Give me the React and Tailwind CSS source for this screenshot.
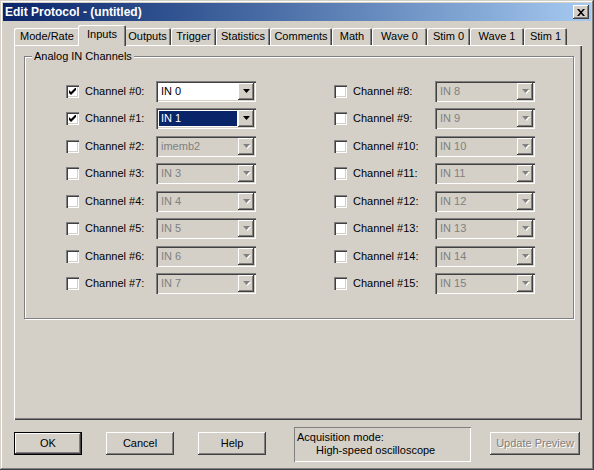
import { Fragment } from 'react'

const TABS = [
  { label: 'Mode/Rate', w: 'w-[66px]' },
  { label: 'Inputs', w: 'w-[48px]', active: true },
  { label: 'Outputs', w: 'w-[47px]' },
  { label: 'Trigger', w: 'w-[45px]' },
  { label: 'Statistics', w: 'w-[54px]' },
  { label: 'Comments', w: 'w-[62px]' },
  { label: 'Math', w: 'w-[40px]' },
  { label: 'Wave 0', w: 'w-[55px]' },
  { label: 'Stim 0', w: 'w-[43px]' },
  { label: 'Wave 1', w: 'w-[54px]' },
  { label: 'Stim 1', w: 'w-[43px]' },
]

const LEFT = [
  { n: 0, v: 'IN 0', checked: true, enabled: true },
  { n: 1, v: 'IN 1', checked: true, enabled: true, selected: true },
  { n: 2, v: 'imemb2' },
  { n: 3, v: 'IN 3' },
  { n: 4, v: 'IN 4' },
  { n: 5, v: 'IN 5' },
  { n: 6, v: 'IN 6' },
  { n: 7, v: 'IN 7' },
]

const RIGHT = [8, 9, 10, 11, 12, 13, 14, 15].map((n) => ({ n, v: `IN ${n}` }))

const SUNKEN = 'shadow-[inset_1px_1px_0_#808080,inset_2px_2px_0_#404040,inset_-1px_-1px_0_#fff,inset_-2px_-2px_0_#d4d0c8]'
const RAISED = 'shadow-[inset_-1px_-1px_0_#404040,inset_1px_1px_0_#fff,inset_-2px_-2px_0_#808080,inset_2px_2px_0_#d4d0c8]'

const Checkbox = ({ checked }) => (
  <div className={`w-[13px] h-[13px] bg-white flex items-center justify-center shrink-0 ${SUNKEN}`}>
    {checked && (
      <svg width="7" height="7" viewBox="0 0 7 7">
        <path d="M0 2 L2 4 L7 -1 L7 2 L2 7 L0 5 Z" fill="#000" />
      </svg>
    )}
  </div>
)

const Arrow = ({ enabled }) => (
  <svg width="8" height="5" viewBox="0 0 8 5">
    {!enabled && <polygon points="1,1 8,1 4.5,5" fill="#fff" />}
    <polygon points="0,0 7,0 3.5,4" fill={enabled ? '#000' : '#808080'} />
  </svg>
)

const Combo = ({ value, enabled, selected }) => (
  <div className={`w-[100px] h-[21px] p-[2px] flex shrink-0 ${enabled ? 'bg-white' : 'bg-[#d4d0c8]'} ${SUNKEN}`}>
    <div className="flex-1 p-[1px] flex">
      <div
        className={`flex-1 flex items-center pl-[2px] ${selected ? 'bg-[#0a246a] text-white' : enabled ? 'text-black' : 'text-[#808080]'}`}
      >
        {value}
      </div>
    </div>
    <div className={`w-[16px] h-[17px] bg-[#d4d0c8] flex items-center justify-center pl-[1px] ${RAISED}`}>
      <Arrow enabled={enabled} />
    </div>
  </div>
)

const ChannelRow = ({ ch, labelW }) => (
  <div className="flex items-center h-[21px]">
    <Checkbox checked={ch.checked} />
    <span className={`ml-[6px] ${labelW}`}>Channel #{ch.n}:</span>
    <Combo value={ch.v} enabled={ch.enabled} selected={ch.selected} />
  </div>
)

const Button = ({ children, isDefault, disabled, w = 'w-[68px]' }) => (
  <div
    className={`${w} h-[23px] mt-[5px] bg-[#d4d0c8] flex items-center justify-center ${isDefault ? 'border border-black' : ''} ${RAISED} ${disabled ? 'text-[#808080] [text-shadow:1px_1px_0_#fff]' : 'text-black'}`}
  >
    {children}
  </div>
)

export default function App() {
  return (
    <div className="w-[594px] h-[470px] bg-[#d4d0c8] p-[3px] text-[11px] leading-none text-black font-['Liberation_Sans',Arial,sans-serif] shadow-[inset_-1px_-1px_0_#404040,inset_1px_1px_0_#d4d0c8,inset_-2px_-2px_0_#808080,inset_2px_2px_0_#fff] overflow-hidden">
      {/* title bar */}
      <div className="h-[18px] bg-linear-to-r from-[#0a246a] to-[#a6caf0] flex items-center justify-between pl-[2px] pr-[2px]">
        <span className="text-white font-bold text-[12px]">Edit Protocol - (untitled)</span>
        <div className={`w-[16px] h-[14px] bg-[#d4d0c8] flex items-center justify-center ${RAISED}`}>
          <svg width="8" height="7" viewBox="0 0 8 7">
            <path d="M0 0 L2 0 L4 2.2 L6 0 L8 0 L5 3.5 L8 7 L6 7 L4 4.8 L2 7 L0 7 L3 3.5 Z" fill="#000" />
          </svg>
        </div>
      </div>

      <div className="pl-[11px]">
        {/* tabs */}
        <div className="mt-[4px] h-[20px] flex items-end">
          {TABS.map((t) => (
            <div
              key={t.label}
              className={`${t.w} flex items-center justify-center bg-[#d4d0c8] rounded-t-[2px] shadow-[inset_1px_1px_0_#fff,inset_-1px_0_0_#404040,inset_-2px_0_0_#808080] ${t.active ? 'h-[21px] -mx-[2px] -mb-[1px] relative z-10 pb-[2px]' : 'h-[17px]'}`}
            >
              {t.label}
            </div>
          ))}
        </div>

        {/* panel */}
        <div className="w-[568px] h-[375px] pt-[11px] pl-[10px] shadow-[inset_1px_1px_0_#fff,inset_-1px_-1px_0_#404040,inset_-2px_-2px_0_#808080]">
          <div className="relative w-[550px] h-[263px] border border-[#808080] shadow-[inset_1px_1px_0_#fff,1px_1px_0_#fff] pt-[24px] pl-[41px] flex">
            <span className="absolute -top-[6px] left-[7px] bg-[#d4d0c8] px-[2px]">Analog IN Channels</span>
            <div className="w-[268px] flex flex-col gap-[6.43px]">
              {LEFT.map((ch) => (
                <ChannelRow key={ch.n} ch={ch} labelW="w-[71px]" />
              ))}
            </div>
            <div className="flex flex-col gap-[6.43px]">
              {RIGHT.map((ch) => (
                <ChannelRow key={ch.n} ch={ch} labelW="w-[82px]" />
              ))}
            </div>
          </div>
        </div>

        {/* bottom row */}
        <div className="mt-[7px] flex items-start">
          <Button isDefault>OK</Button>
          <div className="w-[24px]" />
          <Button>Cancel</Button>
          <div className="w-[24px]" />
          <Button>Help</Button>
          <div className="w-[28px]" />
          <div className="w-[177px] h-[35px] shadow-[inset_1px_1px_0_#808080,inset_-1px_-1px_0_#fff] pl-[3px] pt-[4px] leading-[13px]">
            <div>Acquisition mode:</div>
            <div className="pl-[19px]">High-speed oscilloscope</div>
          </div>
          <div className="w-[19px]" />
          <Button disabled w="w-[90px]">Update Preview</Button>
        </div>
      </div>
    </div>
  )
}
